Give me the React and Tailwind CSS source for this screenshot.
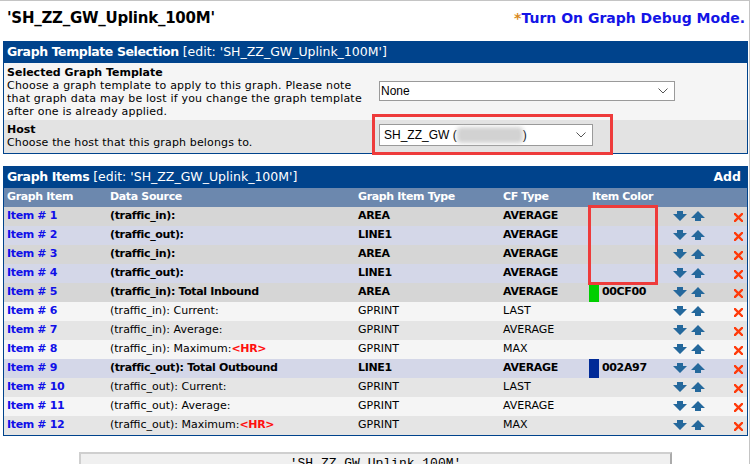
import React from 'react';

const rows = [
  { n: 1, ds: '(traffic_in):', type: 'AREA', cf: 'AVERAGE', bold: true, bg: 'bg-[#d6d6d6]' },
  { n: 2, ds: '(traffic_out):', type: 'LINE1', cf: 'AVERAGE', bold: true, bg: 'bg-[#d4d7e8]' },
  { n: 3, ds: '(traffic_in):', type: 'AREA', cf: 'AVERAGE', bold: true, bg: 'bg-[#d6d6d6]' },
  { n: 4, ds: '(traffic_out):', type: 'LINE1', cf: 'AVERAGE', bold: true, bg: 'bg-[#d4d7e8]' },
  { n: 5, ds: '(traffic_in): Total Inbound', type: 'AREA', cf: 'AVERAGE', bold: true, bg: 'bg-[#d6d6d6]', color: '00CF00', swatch: 'bg-[#00cf00]' },
  { n: 6, ds: '(traffic_in): Current:', type: 'GPRINT', cf: 'LAST', bg: 'bg-[#f5f5f5]' },
  { n: 7, ds: '(traffic_in): Average:', type: 'GPRINT', cf: 'AVERAGE', bg: 'bg-[#e5e5e5]' },
  { n: 8, ds: '(traffic_in): Maximum:', hr: true, type: 'GPRINT', cf: 'MAX', bg: 'bg-[#f5f5f5]' },
  { n: 9, ds: '(traffic_out): Total Outbound', type: 'LINE1', cf: 'AVERAGE', bold: true, bg: 'bg-[#d4d7e8]', color: '002A97', swatch: 'bg-[#002a97]' },
  { n: 10, ds: '(traffic_out): Current:', type: 'GPRINT', cf: 'LAST', bg: 'bg-[#e5e5e5]' },
  { n: 11, ds: '(traffic_out): Average:', type: 'GPRINT', cf: 'AVERAGE', bg: 'bg-[#f5f5f5]' },
  { n: 12, ds: '(traffic_out): Maximum:', hr: true, type: 'GPRINT', cf: 'MAX', bg: 'bg-[#e5e5e5]' },
];

const cols = 'grid grid-cols-[102px_248px_145px_90px_10px_71px_58px_19px]';
const bold = 'font-bold tracking-[-0.35px]';

function DownArrow() {
  return (
    <svg width="14" height="10" viewBox="0 0 14 10">
      <polygon points="4,0 10,0 10,3 14,3 7,10 0,3 4,3" fill="#24689c" />
    </svg>
  );
}

function UpArrow() {
  return (
    <svg width="14" height="10" viewBox="0 0 14 10">
      <polygon points="7,0 14,7 10,7 10,10 4,10 4,7 0,7" fill="#24689c" />
    </svg>
  );
}

function DeleteX() {
  return (
    <svg width="9" height="9" viewBox="0 0 9 9">
      <path d="M1 1L8 8M8 1L1 8" stroke="#ff3a0a" strokeWidth="2.4" strokeLinecap="square" />
    </svg>
  );
}

function Chevron() {
  return (
    <svg width="10" height="6" viewBox="0 0 10 6" className="shrink-0">
      <path d="M0.5 0.5L5 5L9.5 0.5" stroke="#555" strokeWidth="1" fill="none" />
    </svg>
  );
}

function ItemRow({ r }) {
  const w = r.bold ? bold : '';
  return (
    <div className={`${cols} h-[19px] items-center ${r.bg}`}>
      <div className={`pl-[3px] text-[#1010e8] ${bold}`}>Item # {r.n}</div>
      <div className={`pl-[4px] whitespace-nowrap ${w}`}>
        {r.ds}
        {r.hr && <span className={`text-[#ff1010] ${bold}`}>&lt;HR&gt;</span>}
      </div>
      <div className={`pl-[4px] ${w}`}>{r.type}</div>
      <div className={`pl-[4px] ${w}`}>{r.cf}</div>
      <div className={`h-full ${r.swatch || ''}`} />
      <div className={`pl-[3px] ${bold}`}>{r.color}</div>
      <div className="flex gap-[4px] pl-[3px] self-start pt-[4px]">
        <DownArrow />
        <UpArrow />
      </div>
      <div className="pl-[6px] pt-[2px]">
        <DeleteX />
      </div>
    </div>
  );
}

export default function App() {
  return (
    <div className="relative w-[750px] h-[464px] overflow-hidden border-t border-r border-[#c4c4c4] bg-white font-['DejaVu_Sans',sans-serif] text-[11px] text-black">
      <div className="flex items-center justify-between h-[34px] pl-[7px] pr-[4px]">
        <div className="text-[15px] font-bold tracking-[-0.25px]">'SH_ZZ_GW_Uplink_100M'</div>
        <div className="text-[14px] font-bold text-[#1414e6]">
          <span className="text-[#d98a1e]">*</span>Turn On Graph Debug Mode.
        </div>
      </div>

      <div className="ml-[3px] mt-[6px] w-[745px] border border-[#00438c]">
        <div className="h-[21px] bg-[#00438c] text-white text-[12.5px] pl-[3px] flex items-center">
          <span className="font-bold tracking-[-0.4px]">Graph Template Selection</span>
          <span>&nbsp;[edit: 'SH_ZZ_GW_Uplink_100M']</span>
        </div>
        <div className="flex h-[57px] bg-[#f5f5f5]">
          <div className="w-[372px] pl-[3px] pt-[3px] leading-[13px]">
            <div className="font-bold">Selected Graph Template</div>
            <div className="w-[362px] tracking-[0.2px]">Choose a graph template to apply to this graph. Please note that graph data may be lost if you change the graph template after one is already applied.</div>
          </div>
          <div className="pt-[18px] pl-[3px]">
            <div className="w-[296px] h-[20px] border border-[#9a9a9a] bg-white flex items-center justify-between pl-[1px] pr-[6px] font-['Liberation_Sans',sans-serif] text-[12px]">
              <span>None</span>
              <Chevron />
            </div>
          </div>
        </div>
        <div className="flex h-[33px] bg-[#e3e3e3]">
          <div className="w-[372px] pl-[3px] pt-[3px] leading-[13px]">
            <div className="font-bold">Host</div>
            <div className="tracking-[0.15px]">Choose the host that this graph belongs to.</div>
          </div>
          <div className="pt-[4px] pl-[3px]">
            <div className="w-[214px] h-[22px] border border-[#9a9a9a] bg-white flex items-center justify-between pl-[4px] pr-[6px] font-['Liberation_Sans',sans-serif] text-[12px]">
              <span className="flex items-center">
                SH_ZZ_GW (
                <span className="inline-block w-[66px] h-[16px] bg-[#d2d2d2] blur-[2px] rounded-[4px]" />
                )
              </span>
              <Chevron />
            </div>
          </div>
        </div>
      </div>

      <div className="ml-[3px] mt-[12px] w-[745px] border border-[#00438c]">
        <div className="h-[21px] bg-[#00438c] text-white text-[12.5px] pl-[3px] pr-[6px] flex items-center justify-between">
          <div>
            <span className="font-bold tracking-[-0.4px]">Graph Items</span>
            <span>&nbsp;[edit: 'SH_ZZ_GW_Uplink_100M']</span>
          </div>
          <span className="font-bold">Add</span>
        </div>
        <div className={`${cols} h-[19px] items-center bg-[#6c88ae] text-white ${bold}`}>
          <div className="pl-[3px]">Graph Item</div>
          <div className="pl-[4px]">Data Source</div>
          <div className="pl-[4px]">Graph Item Type</div>
          <div className="pl-[4px]">CF Type</div>
          <div className="col-span-2 pl-[3px]">Item Color</div>
          <div />
          <div />
        </div>
        {rows.map((r) => (
          <ItemRow key={r.n} r={r} />
        ))}
      </div>

      <div className="ml-[79px] mt-[16px] w-[593px] h-[40px] border-t-2 border-l-2 border-r-2 border-t-[#cfcfcf] border-l-[#cfcfcf] border-r-[#ababab] bg-[#f0f0f0] text-center pt-[3px] font-['Liberation_Mono',monospace] text-[13px] leading-[14px]">
        'SH_ZZ_GW_Uplink_100M'
      </div>

      <div className="absolute left-[372px] top-[113px] w-[241px] h-[41px] border-[3px] border-[#ee3b3b]" />
      <div className="absolute left-[588px] top-[204px] w-[70px] h-[80px] border-[3px] border-[#ee3b3b]" />
    </div>
  );
}
